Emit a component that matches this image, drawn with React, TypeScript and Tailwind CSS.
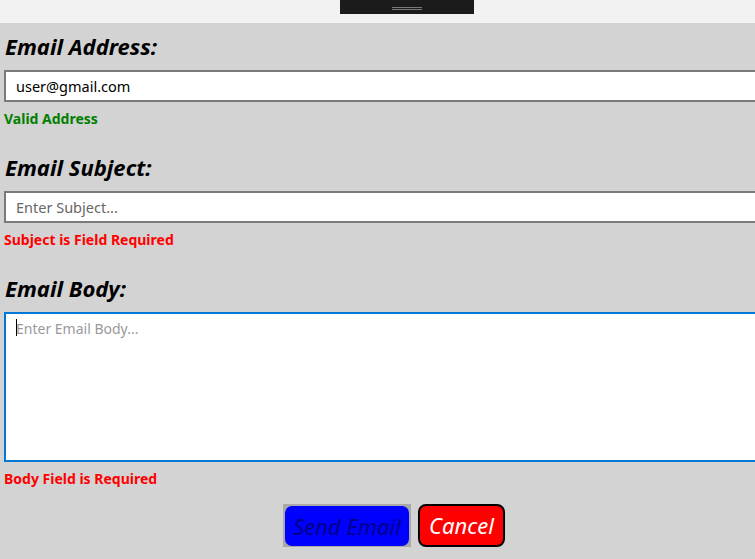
export default function App() {
  return (
    <div className="w-[755px] h-[559px] overflow-hidden flex flex-col bg-[#d3d3d3] font-['Noto_Sans',sans-serif]">
      <div className="h-[23px] shrink-0 bg-[#f2f2f2]">
        <div className="ml-[340px] w-[134px] h-[14px] bg-[#1b1b1b] flex flex-col items-center pt-[7px] gap-[1px]">
          <div className="w-[30px] h-px bg-[#7a7a7a]" />
          <div className="w-[30px] h-px bg-[#7a7a7a]" />
        </div>
      </div>

      <div className="pt-[8px] pl-[4px] w-[800px]">
        <div className="flex flex-col gap-[23px]">
          {fields.map((f) => (
            <div key={f.id}>
              <h2 className="text-[22px] leading-[30px] font-bold italic text-black mb-[9px] pl-px">
                {f.label}
              </h2>
              {f.multiline ? (
                <div className="relative">
                  <textarea
                    placeholder={f.placeholder}
                    className="block w-full h-[150px] border-2 border-[#0078d7] bg-white px-[10px] py-[4px] text-[14px] leading-[22px] outline-none resize-none placeholder:text-[#9a9a9a]"
                  />
                  <span className="absolute left-[12px] top-[7px] w-px h-[17px] bg-black" />
                </div>
              ) : (
                <input
                  defaultValue={f.value}
                  placeholder={f.placeholder}
                  className="block w-full h-[32px] border-2 border-[#7a7a7a] bg-white px-[10px] text-[14.5px] text-black outline-none placeholder:text-[#666666]"
                />
              )}
              <p className={`mt-[7px] text-[14px] leading-[20px] font-bold ${f.ok ? "text-[#008000]" : "text-[#ff0000]"}`}>
                {f.message}
              </p>
            </div>
          ))}
        </div>

        <div className="flex items-start ml-[279px] mt-[15px] gap-[7px]">
          <div className="w-[128px] h-[43px] bg-[#a9a9a9] p-[2px] pb-px">
            <button className="w-full h-full rounded-[7px] bg-[#0000ff] text-[#00008b] text-[22px] italic">
              Send Email
            </button>
          </div>
          <button className="w-[87px] h-[43px] rounded-[8px] border-2 border-black bg-[#ff0000] text-white text-[22px] italic">
            Cancel
          </button>
        </div>
      </div>
    </div>
  );
}

const fields = [
  {
    id: 1,
    label: "Email Address:",
    value: "user@gmail.com",
    placeholder: "",
    message: "Valid Address",
    ok: true,
    multiline: false,
  },
  {
    id: 2,
    label: "Email Subject:",
    value: undefined,
    placeholder: "Enter Subject...",
    message: "Subject is Field Required",
    ok: false,
    multiline: false,
  },
  {
    id: 3,
    label: "Email Body:",
    value: undefined,
    placeholder: "Enter Email Body...",
    message: "Body Field is Required",
    ok: false,
    multiline: true,
  },
];
